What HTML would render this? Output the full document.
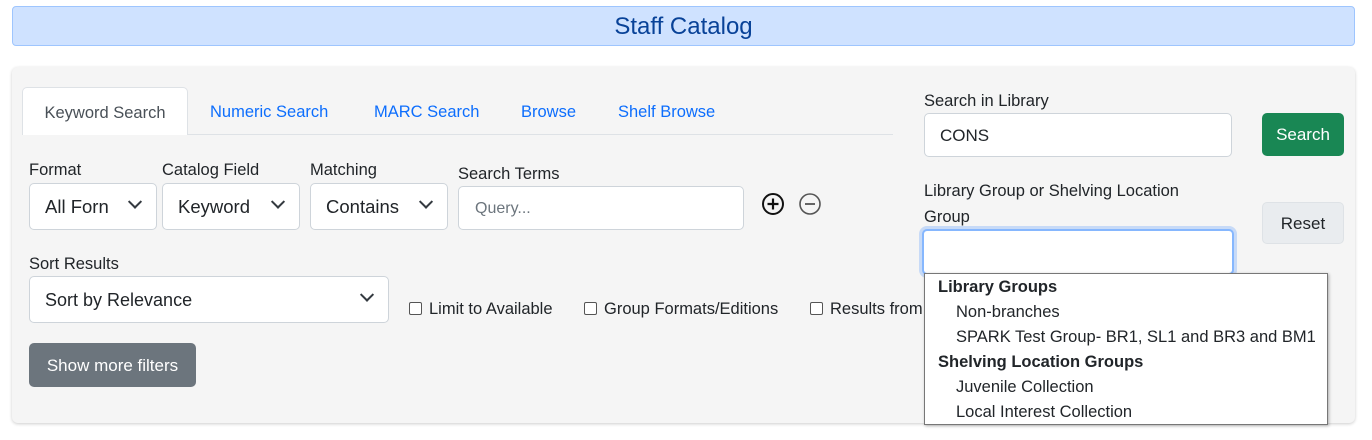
<!DOCTYPE html>
<html><head><meta charset="utf-8"><style>
*{box-sizing:border-box}
body{margin:0;width:1372px;height:440px;background:#fff;font-family:"Liberation Sans",sans-serif;color:#212529;position:relative;overflow:hidden;font-size:16px}
.a{position:absolute}
.hdr{left:12px;top:6px;width:1343px;height:40px;background:#cfe2ff;border:1px solid #9ec5fe;border-radius:4px;text-align:center;line-height:40px;font-size:24px;color:#084298}
.panel{left:12px;top:67px;width:1343px;height:356px;background:#f5f5f5;border-radius:6px;box-shadow:0 1px 3px rgba(0,0,0,.2)}
.tabline{left:22px;top:134px;width:871px;height:1px;background:#dee2e6}
.tab{top:88px;height:48px;line-height:48px;font-size:16.5px;color:#0d6efd}
.tabact{left:22px;top:87px;width:166px;background:#fff;border:1px solid #dee2e6;border-bottom:none;border-radius:5px 5px 0 0;color:#495057;text-align:center;line-height:50px}
.lbl{font-size:16.5px;color:#212529}
.sel{background:#fff;border:1px solid #ced4da;border-radius:5px;font-size:18.5px;padding-left:15px;line-height:46px;height:47px}
.chev{position:absolute;right:16px;top:17px;width:10px;height:10px;border-right:2px solid #343a40;border-bottom:2px solid #343a40;transform:rotate(45deg) translate(-3px,-3px)}
.inp{background:#fff;border:1px solid #ced4da;border-radius:5px}
.cb{width:13px;height:13px;border:1px solid #555;border-radius:2px;background:#fff;display:inline-block;vertical-align:-1px;margin-right:7px}
.dd{left:924px;top:273px;width:404px;height:152px;background:#fff;border:1px solid #777;box-shadow:1px 1px 3px rgba(0,0,0,.3);font-size:16.5px;line-height:25px;padding-top:1px}
.dd b{display:block;padding-left:13px}
.dd span{display:block;padding-left:31px}
</style></head><body>
<div class="a hdr">Staff Catalog</div>
<div class="a panel"></div>
<div class="a tabline"></div>
<div class="a tab tabact">Keyword Search</div>
<div class="a tab" style="left:210px">Numeric Search</div>
<div class="a tab" style="left:374px">MARC Search</div>
<div class="a tab" style="left:521px">Browse</div>
<div class="a tab" style="left:618px">Shelf Browse</div>

<div class="a lbl" style="left:29px;top:161px">Format</div>
<div class="a lbl" style="left:162px;top:161px">Catalog Field</div>
<div class="a lbl" style="left:310px;top:161px">Matching</div>
<div class="a lbl" style="left:458px;top:165px">Search Terms</div>
<div class="a sel" style="left:29px;top:183px;width:128px">All Forn<div class="chev"></div></div>
<div class="a sel" style="left:162px;top:183px;width:138px">Keyword<div class="chev"></div></div>
<div class="a sel" style="left:310px;top:183px;width:138px">Contains<div class="chev"></div></div>
<div class="a inp" style="left:458px;top:186px;width:286px;height:44px;padding-left:16px;line-height:44px;color:#6c757d;font-size:16px">Query...</div>
<svg class="a" style="left:761px;top:192px" width="26" height="26" viewBox="0 0 26 26"><circle cx="12" cy="12" r="10" fill="none" stroke="#111" stroke-width="2"/><path d="M12 6.5v11M6.5 12h11" stroke="#111" stroke-width="2.2"/></svg>
<svg class="a" style="left:798px;top:192px" width="26" height="26" viewBox="0 0 26 26"><circle cx="12" cy="12" r="10" fill="none" stroke="#555" stroke-width="1.6"/><path d="M7 12h10" stroke="#555" stroke-width="1.8"/></svg>

<div class="a lbl" style="left:29px;top:255px">Sort Results</div>
<div class="a sel" style="left:29px;top:276px;width:360px;font-size:18px">Sort by Relevance<div class="chev"></div></div>
<div class="a lbl" style="left:409px;top:300px"><span class="cb"></span>Limit to Available</div>
<div class="a lbl" style="left:584px;top:300px"><span class="cb"></span>Group Formats/Editions</div>
<div class="a lbl" style="left:810px;top:300px"><span class="cb"></span>Results from</div>
<div class="a" style="left:29px;top:343px;width:167px;height:44px;background:#6c757d;border-radius:5px;color:#fff;font-size:17px;line-height:46px;text-align:center">Show more filters</div>

<div class="a lbl" style="left:924px;top:92px">Search in Library</div>
<div class="a inp" style="left:924px;top:113px;width:308px;height:44px;padding-left:15px;line-height:44px;font-size:17px">CONS</div>
<div class="a" style="left:1262px;top:113px;width:82px;height:43px;background:#198754;border-radius:5px;color:#fff;font-size:17px;line-height:44px;text-align:center">Search</div>
<div class="a lbl" style="left:924px;top:178px;line-height:26px">Library Group or Shelving Location<br>Group</div>
<div class="a" style="left:1262px;top:202px;width:82px;height:42px;background:#e9ecef;border:1px solid #dee2e6;border-radius:5px;font-size:17px;line-height:42px;text-align:center">Reset</div>
<div class="a inp" style="left:922px;top:229px;width:312px;height:46px;border:2px solid #86b7fe;box-shadow:0 0 0 3px rgba(13,110,253,.2)"></div>
<div class="a dd"><b>Library Groups</b><span>Non-branches</span><span>SPARK Test Group- BR1, SL1 and BR3 and BM1</span><b>Shelving Location Groups</b><span>Juvenile Collection</span><span>Local Interest Collection</span></div>
</body></html>
